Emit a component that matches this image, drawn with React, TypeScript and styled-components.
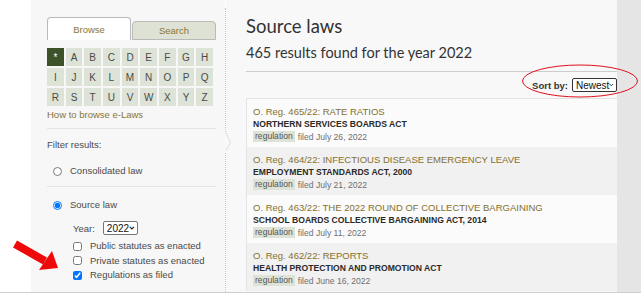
import styled, { createGlobalStyle } from 'styled-components';

const GlobalStyle = createGlobalStyle`
  html, body { margin: 0; padding: 0; background: #fff; }
  body { font-family: "Liberation Sans", Arial, sans-serif; }
  * { box-sizing: border-box; }
`;

const Page = styled.div`
  position: relative;
  width: 641px;
  height: 295px;
  overflow: hidden;
  display: flex;
  flex-direction: column;
  background: #fff;
`;

const Body = styled.div`
  display: flex;
  height: 292px;
`;

const BottomRule = styled.div`
  height: 1px;
  background: #cfcfcf;
`;

const Gutter = styled.div`
  width: 31px;
  background: #fff;
`;

const Sidebar = styled.aside`
  width: 194px;
  background: #f7f7f7;
  padding: 17px 9px 0 16px;
  color: #4a4a4a;
  font-size: 9.5px;
`;

const TabRow = styled.div`
  display: flex;
  align-items: flex-end;
  gap: 1px;
  height: 23px;
`;

const Tab = styled.div<{ $active?: boolean }>`
  width: 84px;
  height: ${(p) => (p.$active ? '23px' : '19px')};
  display: flex;
  align-items: center;
  justify-content: center;
  color: #8b7536;
  font-size: 9.5px;
  border: 1px solid #b9b9b9;
  border-bottom: ${(p) => (p.$active ? 'none' : '1px solid #b9b9b9')};
  border-radius: 4px 4px 0 0;
  background: ${(p) => (p.$active ? '#fff' : '#dde2d4')};
`;

const LetterGrid = styled.div`
  margin-top: 8px;
  width: 166px;
  display: grid;
  grid-template-columns: repeat(9, 1fr);
  grid-auto-rows: 18px;
  gap: 2px;
`;

const Letter = styled.div<{ $active?: boolean }>`
  display: flex;
  align-items: center;
  justify-content: center;
  background: ${(p) => (p.$active ? '#3d5229' : '#dde3d6')};
  color: ${(p) => (p.$active ? '#fff' : '#4a4a4a')};
  font-size: 10px;
`;

const HelpLink = styled.div`
  margin-top: 2px;
  line-height: 14px;
  color: #8b7536;
`;

const Separator = styled.div<{ $top: number }>`
  margin-top: ${(p) => p.$top}px;
  height: 1px;
  background: #e3e3e3;
`;

const FilterLabel = styled.div`
  margin-top: 9px;
  line-height: 14px;
`;

const OptionRow = styled.label<{ $top: number; $indent: number; $lh?: number }>`
  display: flex;
  align-items: center;
  gap: 8px;
  margin-top: ${(p) => p.$top}px;
  padding-left: ${(p) => p.$indent}px;
  height: ${(p) => p.$lh ?? 14}px;
  line-height: ${(p) => p.$lh ?? 14}px;

  input {
    width: 9px;
    height: 9px;
    margin: 0;
    flex: none;
  }
`;

const YearRow = styled.div`
  display: flex;
  align-items: center;
  gap: 8px;
  margin-top: 9px;
  padding-left: 26px;
  height: 14px;
`;

const FakeSelect = styled.div<{ $width: number; $dark?: boolean }>`
  width: ${(p) => p.$width}px;
  height: 14px;
  display: flex;
  align-items: center;
  justify-content: space-between;
  padding: 0 2px 0 3px;
  border: 1px solid ${(p) => (p.$dark ? '#333' : '#767676')};
  border-radius: 2px;
  background: #fff;
  color: #111;
  font-size: 10px;
  font-weight: normal;
`;

const Divider = styled.div`
  position: relative;
  width: 1px;
  margin-top: 8px;
  border-left: 1px dotted #c2c2c2;
`;

const Notch = styled.svg`
  position: absolute;
  left: -2px;
  top: 124px;
`;

const Main = styled.main`
  width: 391px;
  background: #f8f8f8;
  padding: 13px 0 0 20px;
  color: #333;
`;

const Title = styled.h1`
  margin: 0;
  font-family: Lato, "Open Sans", sans-serif;
  font-weight: 400;
  font-size: 18.5px;
  line-height: 26px;
  color: #333;
`;

const Subtitle = styled.div`
  margin-top: 3px;
  font-family: Lato, "Open Sans", sans-serif;
  font-size: 14.5px;
  line-height: 22px;
  padding-bottom: 7px;
  border-bottom: 1px solid #cdcdcd;
`;

const SortRow = styled.div`
  display: flex;
  justify-content: flex-end;
  align-items: center;
  gap: 4px;
  height: 26px;
  font-size: 9.5px;
  font-weight: bold;
`;

const ResultList = styled.ul`
  list-style: none;
  margin: 0;
  padding: 0;
  border-top: 1px solid #e3e3e3;
  border-left: 1px solid #e3e3e3;
`;

const ResultItem = styled.li<{ $alt: boolean }>`
  height: 48px;
  padding: 6px 6px 0;
  background: ${(p) => (p.$alt ? '#f1f1f1' : '#fbfbfb')};
`;

const ResultTitle = styled.div`
  color: #85702c;
  font-size: 9.5px;
  line-height: 13px;
`;

const ActName = styled.div`
  color: #2a2a2a;
  font-size: 8.6px;
  font-weight: bold;
  line-height: 12px;
`;

const MetaRow = styled.div`
  display: flex;
  align-items: center;
  gap: 3px;
  height: 13px;
  font-size: 8.6px;
  color: #6f6f6f;
`;

const Badge = styled.span`
  display: inline-block;
  background: #dde3d6;
  color: #555;
  line-height: 11px;
  padding: 0 2px;
`;

const RightStrip = styled.div`
  width: 24px;
  background: #e5e5e5;
`;

const Annotation = styled.svg<{ $left: number; $top: number }>`
  position: absolute;
  left: ${(p) => p.$left}px;
  top: ${(p) => p.$top}px;
  pointer-events: none;
`;

const Chevron = () => (
  <svg width="6" height="4" viewBox="0 0 6 4">
    <path d="M0.8 0.8 L3 3 L5.2 0.8" fill="none" stroke="#222" strokeWidth="1.2" />
  </svg>
);

const letters = ['*', 'A', 'B', 'C', 'D', 'E', 'F', 'G', 'H', 'I', 'J', 'K', 'L', 'M', 'N', 'O', 'P', 'Q', 'R', 'S', 'T', 'U', 'V', 'W', 'X', 'Y', 'Z'];

const results = [
  { title: 'O. Reg. 465/22: RATE RATIOS', act: 'NORTHERN SERVICES BOARDS ACT', filed: 'July 26, 2022' },
  { title: 'O. Reg. 464/22: INFECTIOUS DISEASE EMERGENCY LEAVE', act: 'EMPLOYMENT STANDARDS ACT, 2000', filed: 'July 21, 2022' },
  { title: 'O. Reg. 463/22: THE 2022 ROUND OF COLLECTIVE BARGAINING', act: 'SCHOOL BOARDS COLLECTIVE BARGAINING ACT, 2014', filed: 'July 11, 2022' },
  { title: 'O. Reg. 462/22: REPORTS', act: 'HEALTH PROTECTION AND PROMOTION ACT', filed: 'June 16, 2022' },
];

const App = () => {
  return (
    <Page>
      <GlobalStyle />
      <Body>
        <Gutter />
        <Sidebar>
          <TabRow>
            <Tab $active>Browse</Tab>
            <Tab>Search</Tab>
          </TabRow>
          <LetterGrid>
            {letters.map((l, i) => (
              <Letter key={l} $active={i === 0}>
                {l}
              </Letter>
            ))}
          </LetterGrid>
          <HelpLink>How to browse e-Laws</HelpLink>
          <Separator $top={6} />
          <FilterLabel>Filter results:</FilterLabel>
          <OptionRow $top={12} $indent={6}>
            <input type="radio" name="kind" readOnly />
            Consolidated law
          </OptionRow>
          <Separator $top={8} />
          <OptionRow $top={11} $indent={6}>
            <input type="radio" name="kind" defaultChecked />
            Source law
          </OptionRow>
          <YearRow>
            Year:
            <FakeSelect $width={35}>
              2022
              <Chevron />
            </FakeSelect>
          </YearRow>
          <OptionRow $top={4} $indent={26} $lh={14.5}>
            <input type="checkbox" />
            Public statutes as enacted
          </OptionRow>
          <OptionRow $top={0} $indent={26} $lh={14.5}>
            <input type="checkbox" />
            Private statutes as enacted
          </OptionRow>
          <OptionRow $top={0} $indent={26} $lh={14.5}>
            <input type="checkbox" defaultChecked />
            Regulations as filed
          </OptionRow>
        </Sidebar>
        <Divider>
          <Notch width="8" height="20" viewBox="0 0 8 20">
            <rect x="1" y="0" width="3" height="20" fill="#f8f8f8" />
            <path d="M2 1 L6.5 10 L2 19" fill="none" stroke="#c2c2c2" strokeWidth="1" strokeDasharray="1 1" />
          </Notch>
        </Divider>
        <Main>
          <Title>Source laws</Title>
          <Subtitle>465 results found for the year 2022</Subtitle>
          <SortRow>
            Sort by:
            <FakeSelect $width={45} $dark>
              Newest
              <Chevron />
            </FakeSelect>
          </SortRow>
          <ResultList>
            {results.map((r, i) => (
              <ResultItem key={r.title} $alt={i % 2 === 1}>
                <ResultTitle>{r.title}</ResultTitle>
                <ActName>{r.act}</ActName>
                <MetaRow>
                  <Badge>regulation</Badge>
                  filed {r.filed}
                </MetaRow>
              </ResultItem>
            ))}
          </ResultList>
        </Main>
        <RightStrip />
      </Body>
      <BottomRule />
      <Annotation $left={520} $top={63} width="120" height="37" viewBox="0 0 120 37">
        <ellipse cx="60" cy="18" rx="57.5" ry="16" fill="none" stroke="#e0121c" strokeWidth="1" />
      </Annotation>
      <Annotation $left={10} $top={234} width="52" height="40" viewBox="0 0 52 40">
        <line x1="5" y1="10" x2="35" y2="27" stroke="#ee0a0a" strokeWidth="8" />
        <polygon points="42,17 29,36 48,34" fill="#ee0a0a" />
      </Annotation>
    </Page>
  );
};

export default App;
